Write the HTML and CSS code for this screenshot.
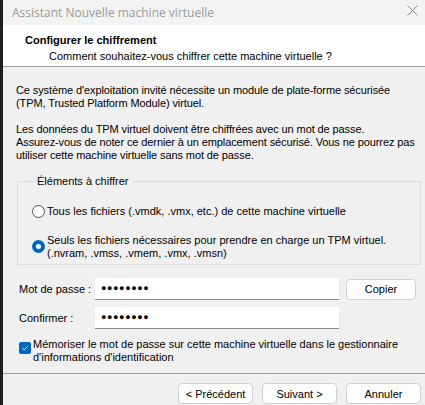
FILE: index.html
```html
<!DOCTYPE html>
<html lang="fr">
<head>
    <meta charset="UTF-8">
    <title>Assistant Nouvelle machine virtuelle</title>
    <link rel="stylesheet" href="styles.css">
</head>
<body>
    <div class="window">
        <div class="titlebar">
            <span class="title">Assistant Nouvelle machine virtuelle</span>
            <svg class="close" width="11" height="11" viewBox="0 0 11 11">
                <path d="M0.5 0.5 L10.5 10.5 M10.5 0.5 L0.5 10.5" stroke="#8a8a8a" stroke-width="1" fill="none"/>
            </svg>
        </div>

        <div class="header">
            <div class="header-title">Configurer le chiffrement</div>
            <div class="header-sub">Comment souhaitez-vous chiffrer cette machine virtuelle ?</div>
        </div>

        <div class="content">
            <p>Ce système d'exploitation invité nécessite un module de plate-forme sécurisée<br>(TPM, Trusted Platform Module) virtuel.</p>
            <p>Les données du TPM virtuel doivent être chiffrées avec un mot de passe.<br>Assurez-vous de noter ce dernier à un emplacement sécurisé. Vous ne pourrez pas<br>utiliser cette machine virtuelle sans mot de passe.</p>

            <fieldset class="group">
                <legend>Éléments à chiffrer</legend>
                <div class="option">
                    <span class="radio"></span>
                    <span>Tous les fichiers (.vmdk, .vmx, etc.) de cette machine virtuelle</span>
                </div>
                <div class="option">
                    <span class="radio checked"></span>
                    <span>Seuls les fichiers nécessaires pour prendre en charge un TPM virtuel.<br>(.nvram, .vmss, .vmem, .vmx, .vmsn)</span>
                </div>
            </fieldset>

            <div class="form-row first">
                <label>Mot de passe :</label>
                <div class="field">●●●●●●●●</div>
                <button class="btn copy" type="button">Copier</button>
            </div>
            <div class="form-row">
                <label>Confirmer :</label>
                <div class="field">●●●●●●●●</div>
            </div>

            <div class="remember">
                <span class="checkbox">
                    <svg width="12" height="12" viewBox="0 0 12 12">
                        <path d="M3.5 6.2 L5.2 7.8 L8.6 4.4" stroke="#ffffff" stroke-width="0.9" fill="none"/>
                    </svg>
                </span>
                <span>Mémoriser le mot de passe sur cette machine virtuelle dans le gestionnaire<br>d'informations d'identification</span>
            </div>
        </div>

        <div class="footer">
            <button class="btn" type="button">&lt; Précédent</button>
            <button class="btn" type="button">Suivant &gt;</button>
            <button class="btn" type="button">Annuler</button>
        </div>
    </div>
</body>
</html>
```

FILE: styles.css
```css
body {
    margin: 0;
    padding: 0;
    background: #1f1f1f;
    font-family: "Liberation Sans", Arial, sans-serif;
    font-size: 11px;
    color: #000;
}

.window {
    margin-left: 3px;
    width: 422px;
    height: 405px;
    background: #f0f0f0;
    display: flex;
    flex-direction: column;
    overflow: hidden;
}

.titlebar {
    height: 25px;
    background: #f3f3f3;
    display: flex;
    align-items: center;
    justify-content: space-between;
    padding: 0 7px 0 9px;
    flex-shrink: 0;
}

.title {
    font-family: "Open Sans", "Noto Sans", sans-serif;
    font-size: 12px;
    color: #9a9a9a;
}

.close {
    margin-top: -4px;
}

.header {
    background: #fff;
    height: 41px;
    padding: 0 0 0 22px;
    border-bottom: 1px solid #a0a0a0;
    flex-shrink: 0;
}

.header-title {
    font-weight: bold;
    margin-top: 9px;
    line-height: 13px;
}

.header-sub {
    padding-left: 24px;
    margin-top: 3px;
    line-height: 13px;
}

.content {
    padding: 17px 4px 0 13px;
    flex: 1;
    white-space: nowrap;
}

.content p {
    margin: 0 0 13px;
    line-height: 13px;
    letter-spacing: -0.1px;
}

.group {
    margin: 0 0 0 1px;
    padding: 18px 0 4px 14px;
    border: 1px solid #dcdcdc;
}

.group legend {
    padding: 0 3px 0 2px;
    margin-left: 3px;
}

.option {
    display: flex;
    align-items: flex-start;
    line-height: 13px;
    margin-bottom: 16px;
}

.option:last-child {
    margin-bottom: 0;
}

.radio {
    width: 11px;
    height: 11px;
    border: 1px solid #555;
    border-radius: 50%;
    background: #fff;
    margin: 0 2px 0 0;
    flex-shrink: 0;
    box-sizing: content-box;
}

.option:last-child .radio {
    margin-top: 6px;
}

.radio.checked {
    width: 5px;
    height: 5px;
    border: 4px solid #0067c0;
}

.form-row {
    display: flex;
    align-items: center;
    margin-top: 7px;
    height: 22px;
}

.form-row.first {
    margin-top: 13px;
}

.form-row label {
    width: 76px;
    padding-left: 3px;
}

.field {
    width: 238px;
    height: 21px;
    background: #fff;
    border-bottom: 1px solid #8a8a8a;
    padding-left: 6px;
    line-height: 21px;
    font-size: 9px;
    letter-spacing: 0.6px;
}

.btn {
    font-family: "Liberation Sans", Arial, sans-serif;
    font-size: 11px;
    width: 75px;
    height: 21px;
    background: #fdfdfd;
    border: 1px solid #d0d0d0;
    border-radius: 4px;
    padding: 0;
    color: #000;
}

.copy {
    width: 70px;
    margin-left: 7px;
}

.remember {
    display: flex;
    align-items: flex-start;
    margin-top: 9px;
    padding-left: 3px;
    line-height: 13px;
}

.checkbox {
    width: 12px;
    height: 12px;
    background: #0067c0;
    border-radius: 2px;
    margin: 4px 2px 0 0;
    flex-shrink: 0;
    display: flex;
}

.footer {
    box-sizing: border-box;
    height: 32px;
    border-top: 1px solid #a0a0a0;
    display: flex;
    justify-content: flex-end;
    align-items: flex-start;
    padding: 9px 4px 0 0;
    gap: 9px;
    flex-shrink: 0;
}
```
